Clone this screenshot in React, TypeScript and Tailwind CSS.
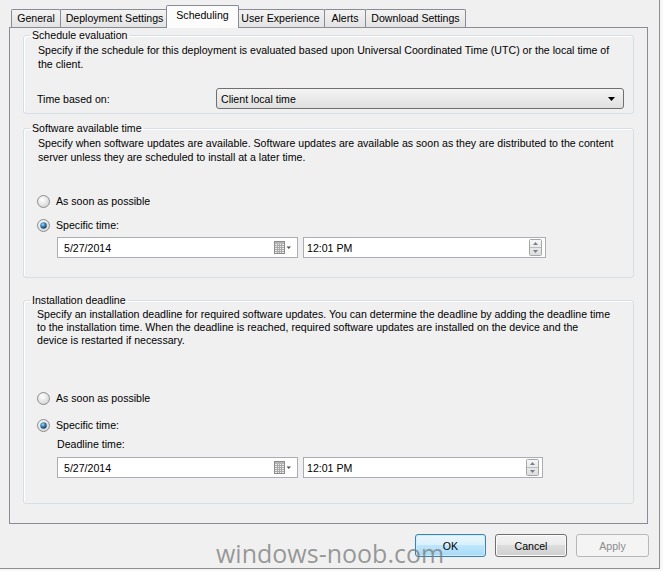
import React from 'react';

// Win7 style radio button
const Radio = ({ checked }: { checked?: boolean }) => (
    <svg width="13" height="13" viewBox="0 0 13 13" className="shrink-0">
        <defs>
            <radialGradient id="radioFace" cx="40%" cy="35%" r="75%">
                <stop offset="0%" stopColor="#ffffff" />
                <stop offset="100%" stopColor="#cfcfcf" />
            </radialGradient>
            <radialGradient id="radioDot" cx="40%" cy="35%" r="70%">
                <stop offset="0%" stopColor="#9fdcfb" />
                <stop offset="55%" stopColor="#2a73a8" />
                <stop offset="100%" stopColor="#0d3553" />
            </radialGradient>
        </defs>
        <circle cx="6.5" cy="6.5" r="6" fill="url(#radioFace)" stroke="#8d8d8d" />
        {checked && <circle cx="6.5" cy="6.5" r="3.2" fill="url(#radioDot)" />}
    </svg>
);

const CalendarIcon = () => (
    <svg width="18" height="13" viewBox="0 0 18 13" className="shrink-0">
        <rect x="0.5" y="0.5" width="10" height="12" fill="#ececec" stroke="#8c8c8c" />
        <rect x="1" y="1" width="9" height="2" fill="#b5b5b5" />
        {[4, 6, 8, 10].map(y => (
            <line key={y} x1="1" y1={y + 0.5} x2="10" y2={y + 0.5} stroke="#a9a9a9" />
        ))}
        {[3, 5, 7].map(x => (
            <line key={x} x1={x + 0.5} y1="3" x2={x + 0.5} y2="12" stroke="#a9a9a9" />
        ))}
        <path d="M12.5 5.5 L17 5.5 L14.75 8 Z" fill="#4d4d4d" />
    </svg>
);

const Spinner = () => (
    <svg width="13" height="17" viewBox="0 0 13 17" className="shrink-0">
        <defs>
            <linearGradient id="spin" x1="0" y1="0" x2="0" y2="1">
                <stop offset="0%" stopColor="#f7f7f7" />
                <stop offset="100%" stopColor="#dcdcdc" />
            </linearGradient>
        </defs>
        <rect x="0.5" y="0.5" width="12" height="16" rx="1" fill="url(#spin)" stroke="#a6a6a6" />
        <line x1="1" y1="8.5" x2="12" y2="8.5" stroke="#bdbdbd" />
        <path d="M4 6 L9 6 L6.5 3 Z" fill="#6f7f8f" />
        <path d="M4 11 L9 11 L6.5 14 Z" fill="#6f7f8f" />
    </svg>
);

const DateTimeRow = ({ timeWidth }: { timeWidth: string }) => (
    <div className="flex items-center gap-[5px] pl-[33px]">
        <div className="flex items-center w-[241px] h-[21px] bg-white border border-[#abadb3] pl-[6px] pr-[5px]">
            <span className="flex-1">5/27/2014</span>
            <CalendarIcon />
        </div>
        <div className={`flex items-center ${timeWidth} h-[21px] bg-white border border-[#abadb3] pl-[3px] pr-[3px]`}>
            <span className="flex-1">12:01 PM</span>
            <Spinner />
        </div>
    </div>
);

const Tab = ({ label, className, selected }: { label: string; className: string; selected?: boolean }) =>
    selected ? (
        <div className={`relative z-10 h-[23px] -mb-px bg-[#fcfcfc] border border-b-0 border-[#898c95] rounded-t-[2px] text-center pt-[2px] leading-[14px] ${className}`}>
            {label}
        </div>
    ) : (
        <div className={`h-[18px] bg-[linear-gradient(#f3f3f3,#e3e3e3)] border border-b-0 border-[#898c95] rounded-t-[2px] text-center pt-px leading-[15px] ${className}`}>
            {label}
        </div>
    );

const groupBox = 'border border-[#d5dfe5] rounded-[3px] shadow-[inset_1px_1px_0_#ffffff]';

export default function App() {
    return (
        <div className="w-[663px] h-[571px] bg-[#f7f7f7] font-['Liberation_Sans',Arial,sans-serif] text-[10.6px] leading-[14px] text-black">
            <div className="relative w-[660px] h-[569px] bg-[#f0f0f0] border-r border-b border-[#8e8e8e] pt-[5px]">
                {/* Tabs */}
                <div className="flex items-end h-[22px]">
                    <Tab label="General" className="ml-[11px] w-[50px]" />
                    <Tab label="Deployment Settings" className="-ml-px w-[109px]" />
                    <Tab label="Scheduling" className="-ml-[3px] w-[73px]" selected />
                    <Tab label="User Experience" className="-ml-[3px] w-[89px]" />
                    <Tab label="Alerts" className="-ml-px w-[42px]" />
                    <Tab label="Download Settings" className="-ml-px w-[101px]" />
                </div>

                {/* Tab page */}
                <div className="ml-[9px] w-[639px] h-[497px] border border-[#898c95] px-[13px]">
                    <fieldset className={`${groupBox} h-[86px]`}>
                        <legend className="ml-[6px] px-[2px]">Schedule evaluation</legend>
                        <div className="pl-[14px] pt-px whitespace-nowrap">
                            <div>Specify if the schedule for this deployment is evaluated based upon Universal Coordinated Time (UTC) or the local time of</div>
                            <div>the client.</div>
                        </div>
                        <div className="flex items-center mt-[17px] pl-[13px]">
                            <span className="w-[179px]">Time based on:</span>
                            <div className="flex items-center w-[408px] h-[21px] rounded-[3px] border border-[#707070] bg-[linear-gradient(#f4f4f4,#e0e0e0)] pl-[4px] pr-[8px]">
                                <span className="flex-1">Client local time</span>
                                <svg width="7" height="4" viewBox="0 0 7 4"><path d="M0 0 L7 0 L3.5 4 Z" fill="#000" /></svg>
                            </div>
                        </div>
                    </fieldset>

                    <fieldset className={`${groupBox} h-[157px] mt-[7px]`}>
                        <legend className="ml-[6px] px-[2px]">Software available time</legend>
                        <div className="pl-[14px] pt-px whitespace-nowrap">
                            <div>Specify when software updates are available. Software updates are available as soon as they are distributed to the content</div>
                            <div>server unless they are scheduled to install at a later time.</div>
                        </div>
                        <div className="flex items-center gap-[6px] pl-[13px] mt-[29px] h-[16px]">
                            <Radio />
                            <span>As soon as possible</span>
                        </div>
                        <div className="flex items-center gap-[6px] pl-[13px] mt-[8px] h-[16px]">
                            <Radio checked />
                            <span>Specific time:</span>
                        </div>
                        <div className="mt-[4px]">
                            <DateTimeRow timeWidth="w-[243px]" />
                        </div>
                    </fieldset>

                    <fieldset className={`${groupBox} h-[211px] mt-[15px]`}>
                        <legend className="ml-[6px] px-[2px]">Installation deadline</legend>
                        <div className="pl-[13px] pt-px whitespace-nowrap leading-[13px]">
                            <div>Specify an installation deadline for required software updates. You can determine the deadline by adding the deadline time</div>
                            <div>to the installation time. When the deadline is reached, required software updates are installed on the device and the</div>
                            <div>device is restarted if necessary.</div>
                        </div>
                        <div className="flex items-center gap-[6px] pl-[13px] mt-[43px] h-[16px]">
                            <Radio />
                            <span>As soon as possible</span>
                        </div>
                        <div className="flex items-center gap-[6px] pl-[13px] mt-[11px] h-[16px]">
                            <Radio checked />
                            <span>Specific time:</span>
                        </div>
                        <div className="pl-[33px] mt-[4px]">Deadline time:</div>
                        <div className="mt-[6px]">
                            <DateTimeRow timeWidth="w-[240px]" />
                        </div>
                    </fieldset>
                </div>

                {/* Dialog buttons */}
                <div className="flex justify-end gap-[9px] w-[649px] mt-[10px]">
                    <button className="w-[71px] h-[23px] rounded-[3px] border border-[#3c7fb1] bg-[linear-gradient(#eaf6fd_0%,#d9f0fc_50%,#bee6fd_50%,#a7d9f5_100%)] shadow-[inset_0_0_0_1px_#cdeefc]">
                        OK
                    </button>
                    <button className="w-[72px] h-[23px] rounded-[3px] border border-[#707070] bg-[linear-gradient(#f2f2f2_0%,#ebebeb_50%,#dddddd_50%,#cfcfcf_100%)] shadow-[inset_0_0_0_1px_#fcfcfc]">
                        Cancel
                    </button>
                    <button className="w-[73px] h-[23px] rounded-[3px] border border-[#b5b9bc] bg-[#f4f4f4] text-[#8c8c8c]">
                        Apply
                    </button>
                </div>

                {/* watermark */}
                <div className="absolute left-[216px] top-[537px] font-['Open_Sans',sans-serif] text-[25px] leading-[32px] text-[#7a7a7a]/75 pointer-events-none">
                    windows-noob.com
                </div>
            </div>
        </div>
    );
}
